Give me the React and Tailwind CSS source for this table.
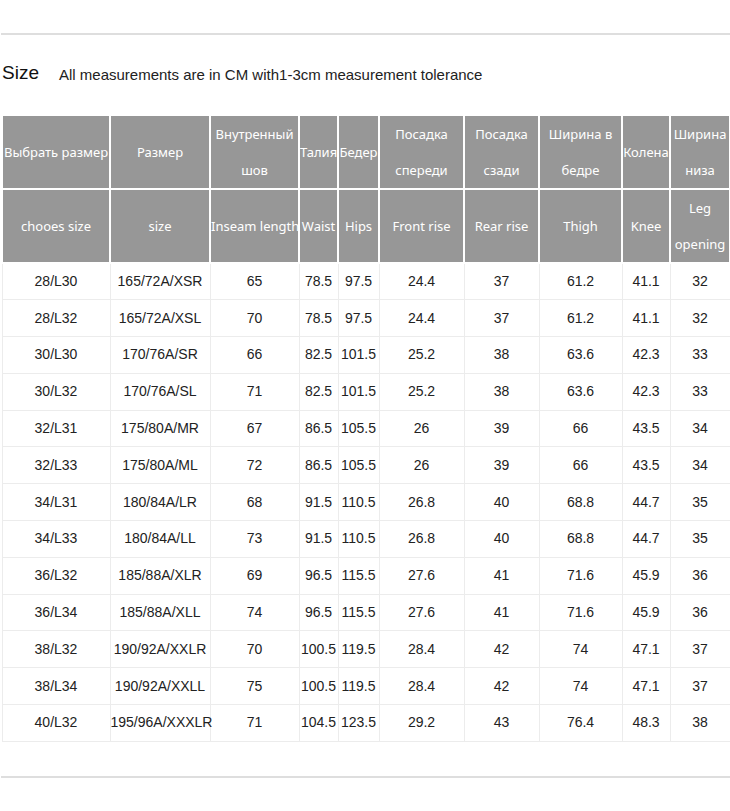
import React from 'react';

const rows = [
  ['28/L30', '165/72A/XSR', '65', '78.5', '97.5', '24.4', '37', '61.2', '41.1', '32'],
  ['28/L32', '165/72A/XSL', '70', '78.5', '97.5', '24.4', '37', '61.2', '41.1', '32'],
  ['30/L30', '170/76A/SR', '66', '82.5', '101.5', '25.2', '38', '63.6', '42.3', '33'],
  ['30/L32', '170/76A/SL', '71', '82.5', '101.5', '25.2', '38', '63.6', '42.3', '33'],
  ['32/L31', '175/80A/MR', '67', '86.5', '105.5', '26', '39', '66', '43.5', '34'],
  ['32/L33', '175/80A/ML', '72', '86.5', '105.5', '26', '39', '66', '43.5', '34'],
  ['34/L31', '180/84A/LR', '68', '91.5', '110.5', '26.8', '40', '68.8', '44.7', '35'],
  ['34/L33', '180/84A/LL', '73', '91.5', '110.5', '26.8', '40', '68.8', '44.7', '35'],
  ['36/L32', '185/88A/XLR', '69', '96.5', '115.5', '27.6', '41', '71.6', '45.9', '36'],
  ['36/L34', '185/88A/XLL', '74', '96.5', '115.5', '27.6', '41', '71.6', '45.9', '36'],
  ['38/L32', '190/92A/XXLR', '70', '100.5', '119.5', '28.4', '42', '74', '47.1', '37'],
  ['38/L34', '190/92A/XXLL', '75', '100.5', '119.5', '28.4', '42', '74', '47.1', '37'],
  ['40/L32', '195/96A/XXXLR', '71', '104.5', '123.5', '29.2', '43', '76.4', '48.3', '38'],
];

const widths = [108, 100, 89, 39, 41, 85, 75, 83, 48, 60];

const ruHeads = [
  ['Выбрать размер'],
  ['Размер'],
  ['Внутренный', 'шов'],
  ['Талия'],
  ['Бедер'],
  ['Посадка', 'спереди'],
  ['Посадка', 'сзади'],
  ['Ширина в', 'бедре'],
  ['Колена'],
  ['Ширина', 'низа'],
];

const enHeads = [
  ['chooes size'],
  ['size'],
  ['Inseam length'],
  ['Waist'],
  ['Hips'],
  ['Front rise'],
  ['Rear rise'],
  ['Thigh'],
  ['Knee'],
  ['Leg', 'opening'],
];

const HeadRow = ({ cells }) => (
  <tr className="h-[70px]">
    {cells.map((lines, i) => (
      <th
        key={i}
        className="border-2 border-white bg-[#979797] p-0 text-center align-middle font-normal text-[13px] leading-[36px] text-white whitespace-nowrap"
      >
        {lines.map((l, j) => (
          <div key={j}>{l}</div>
        ))}
      </th>
    ))}
  </tr>
);

export default function App() {
  return (
    <div className="w-[730px] bg-white pt-[33px]" style={{ fontFamily: '"Liberation Sans", Arial, sans-serif' }}>
      <div className="ml-px h-[2px] bg-[#dedede]" />

      <div className="flex h-[79px] items-center pb-[2px]">
        <span className="pl-[2px] text-[19px] text-[#111]">Size</span>
        <span className="ml-[20px] pt-[3px] text-[15px] text-[#222]">
          All measurements are in CM with1-3cm measurement tolerance
        </span>
      </div>

      <table
        className="ml-px table-fixed border-collapse"
        style={{ width: 728 }}
      >
        <colgroup>
          {widths.map((w, i) => (
            <col key={i} style={{ width: w }} />
          ))}
        </colgroup>
        <thead style={{ fontFamily: '"Noto Sans", "Open Sans", sans-serif' }}>
          <HeadRow cells={ruHeads} />
          <HeadRow cells={enHeads} />
        </thead>
        <tbody>
          {rows.map((r, i) => (
            <tr key={i} className="h-[36.8px]">
              {r.map((c, j) => (
                <td
                  key={j}
                  className="border border-[#ececec] p-0 text-center align-middle text-[14px] text-[#222] whitespace-nowrap"
                >
                  {c}
                </td>
              ))}
            </tr>
          ))}
        </tbody>
      </table>

      <div className="mt-[34px] ml-px h-[2px] bg-[#dedede]" />
      <div className="h-[33px]" />
    </div>
  );
}
